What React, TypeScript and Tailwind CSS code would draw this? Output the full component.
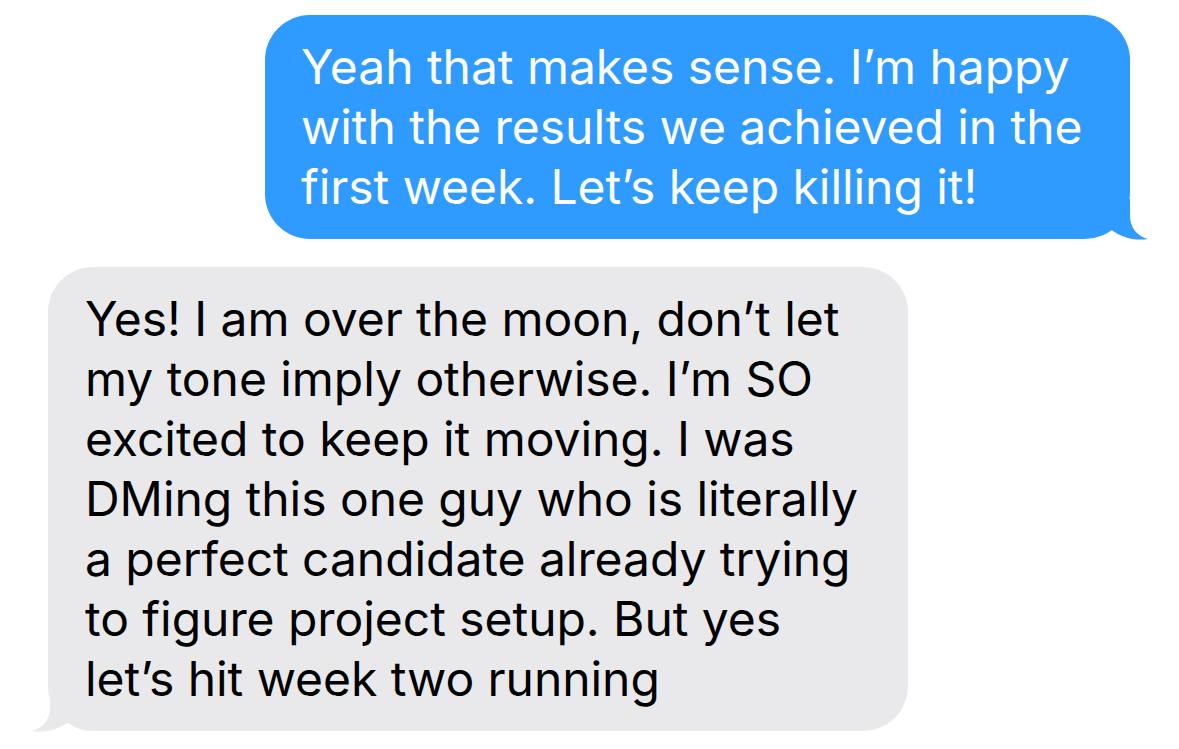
export default function App() {
  const font = { fontFamily: 'Inter, "Noto Sans", sans-serif' }
  return (
    <div className="w-[1179px] h-[749px] bg-white overflow-hidden" style={font}>
      <div className="flex flex-col pt-[15px] px-[48px]">
        {/* Outgoing message */}
        <div className="relative self-end w-[865px] mr-[1px] bg-[#2f9bff] rounded-[45px] pl-[36px] pr-[10px] py-[22px] text-white text-[48px] leading-[60px] tracking-[-0.05px]">
          <div>Yeah that makes sense. I’m happy</div>
          <div>with the results we achieved in the</div>
          <div>first week. Let’s keep killing it!</div>
          <svg className="absolute right-[-18px] bottom-[-1px]" width="40" height="41" viewBox="0 0 40 41">
            <path d="M0 0 H22 V16 C22 29 29 37 40 40 C27 42 14 39 2 30 Z" fill="#2f9bff" />
          </svg>
        </div>

        {/* Incoming message */}
        <div className="relative self-start w-[860px] mt-[28px] bg-[#e9e9eb] rounded-[45px] pl-[37px] pr-[10px] py-[22px] text-black text-[48px] leading-[60px] tracking-[-0.05px]">
          <div>Yes! I am over the moon, don’t let</div>
          <div>my tone imply otherwise. I’m SO</div>
          <div>excited to keep it moving. I was</div>
          <div>DMing this one guy who is literally</div>
          <div>a perfect candidate already trying</div>
          <div>to figure project setup. But yes</div>
          <div>let’s hit week two running</div>
          <svg className="absolute left-[-16px] bottom-[-1px]" width="40" height="41" viewBox="0 0 40 41">
            <path d="M40 0 H18 V16 C18 29 11 37 0 40 C13 42 26 39 38 30 Z" fill="#e9e9eb" />
          </svg>
        </div>
      </div>
    </div>
  )
}
